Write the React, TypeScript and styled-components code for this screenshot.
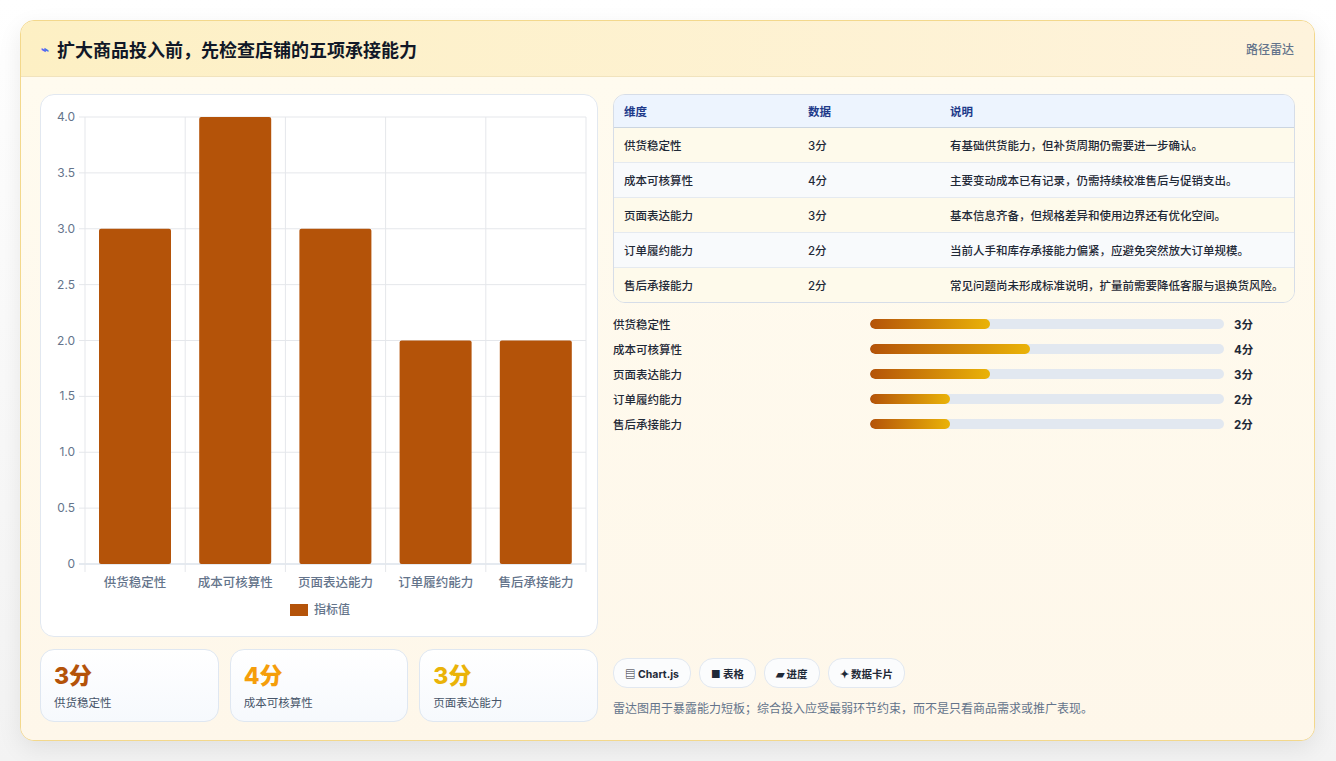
import styled, { createGlobalStyle } from 'styled-components'

const Global = createGlobalStyle`
  body {
    margin: 0;
    background: #f3f3f3;
    font-family: Inter, "Noto Sans CJK SC", sans-serif;
  }
`

const ROWS = [
  { name: '供货稳定性', v: 3, note: '有基础供货能力，但补货周期仍需要进一步确认。' },
  { name: '成本可核算性', v: 4, note: '主要变动成本已有记录，仍需持续校准售后与促销支出。' },
  { name: '页面表达能力', v: 3, note: '基本信息齐备，但规格差异和使用边界还有优化空间。' },
  { name: '订单履约能力', v: 2, note: '当前人手和库存承接能力偏紧，应避免突然放大订单规模。' },
  { name: '售后承接能力', v: 2, note: '常见问题尚未形成标准说明，扩量前需要降低客服与退换货风险。' },
]

const STAT_COLORS = ['#b45309', '#f59e0b', '#eab308']

function BarChart() {
  const W = 556
  const left = 44
  const right = 545
  const top = 22
  const bottom = 469
  const ticks = [0, 0.5, 1, 1.5, 2, 2.5, 3, 3.5, 4]
  const y = (v: number) => bottom - (v / 4) * (bottom - top)
  const cw = (right - left) / 5
  return (
    <svg width={W} height={541} viewBox={`0 0 ${W} 541`}>
      {ticks.map((t) => (
        <g key={t}>
          <line x1={left - 6} x2={right} y1={y(t)} y2={y(t)} stroke={t === 0 ? '#cbd5e1' : '#e5e7eb'} />
          <text x={left - 10} y={y(t) + 4} fontSize="12" fill="#64748b" textAnchor="end">
            {t === 0 ? '0' : t.toFixed(1)}
          </text>
        </g>
      ))}
      {[0, 1, 2, 3, 4, 5].map((i) => (
        <line key={i} x1={left + i * cw} x2={left + i * cw} y1={top} y2={bottom + 8} stroke="#e5e7eb" />
      ))}
      {ROWS.map((r, i) => (
        <g key={r.name}>
          <rect x={left + i * cw + 14} y={y(r.v)} width={72} height={bottom - y(r.v)} fill="#b45309" rx="2" />
          <text x={left + i * cw + cw / 2} y={bottom + 23} fontSize="12.5" fill="#64748b" textAnchor="middle" fontWeight="500">
            {r.name}
          </text>
        </g>
      ))}
      <rect x={249} y={509} width={18} height={12} fill="#b45309" />
      <text x={273} y={519} fontSize="12" fill="#64748b" fontWeight="500">指标值</text>
    </svg>
  )
}

export default function App() {
  return (
    <>
      <Global />
      <Page>
        <Card>
          <Header>
            <Title>
              <Spark>⌁</Spark>扩大商品投入前，先检查店铺的五项承接能力
            </Title>
            <Tag>路径雷达</Tag>
          </Header>
          <Body>
            <LeftCol>
              <ChartCard>
                <BarChart />
              </ChartCard>
              <Stats>
                {ROWS.slice(0, 3).map((r, i) => (
                  <Stat key={r.name}>
                    <StatNum $color={STAT_COLORS[i]}>{r.v}分</StatNum>
                    <StatLabel>{r.name}</StatLabel>
                  </Stat>
                ))}
              </Stats>
            </LeftCol>
            <RightCol>
              <Table>
                <thead>
                  <tr>
                    <Th style={{ width: 164 }}>维度</Th>
                    <Th style={{ width: 122 }}>数据</Th>
                    <Th>说明</Th>
                  </tr>
                </thead>
                <tbody>
                  {ROWS.map((r, i) => (
                    <Tr key={r.name} $odd={i % 2 === 1}>
                      <Td>{r.name}</Td>
                      <Td>{r.v}分</Td>
                      <Td>{r.note}</Td>
                    </Tr>
                  ))}
                </tbody>
              </Table>
              <Progress>
                {ROWS.map((r) => (
                  <PRow key={r.name}>
                    <PLabel>{r.name}</PLabel>
                    <Track>
                      <Fill style={{ width: `${(r.v / 8.85) * 100}%` }} />
                    </Track>
                    <PVal>{r.v}分</PVal>
                  </PRow>
                ))}
              </Progress>
              <Spacer />
              <Chips>
                <Chip>▤ Chart.js</Chip>
                <Chip>■ 表格</Chip>
                <Chip>▰ 进度</Chip>
                <Chip>✦ 数据卡片</Chip>
              </Chips>
              <Note>雷达图用于暴露能力短板；综合投入应受最弱环节约束，而不是只看商品需求或推广表现。</Note>
            </RightCol>
          </Body>
        </Card>
      </Page>
    </>
  )
}

const Page = styled.div`
  padding: 20px 20px 20px 20px;
  background: linear-gradient(#ffffff, #f3f3f3);
  height: 761px;
  box-sizing: border-box;
`

const Card = styled.div`
  width: 1295px;
  height: 721px;
  box-sizing: border-box;
  border: 1px solid #f3d88c;
  border-radius: 14px;
  background: #fff8ec;
  box-shadow: 0 8px 24px rgba(0, 0, 0, 0.08);
  overflow: hidden;
  display: flex;
  flex-direction: column;
`

const Header = styled.div`
  height: 55px;
  flex-shrink: 0;
  display: flex;
  align-items: center;
  justify-content: space-between;
  padding: 0 20px 0 20px;
  background: linear-gradient(90deg, #fdf0c4, #fef3dc);
  border-bottom: 1px solid #f1e3bd;
`

const Title = styled.h1`
  margin: 0;
  font-size: 18px;
  font-weight: 700;
  color: #111827;
  display: flex;
  align-items: center;
  gap: 8px;
`

const Spark = styled.span`
  color: #4f6cf0;
  font-size: 13px;
`

const Tag = styled.span`
  font-size: 12px;
  color: #64748b;
  font-weight: 500;
`

const Body = styled.div`
  flex: 1;
  display: flex;
  gap: 15px;
  padding: 17px 19px 18px 19px;
  background: linear-gradient(#fffbef, #fef7ea);
`

const LeftCol = styled.div`
  width: 558px;
  display: flex;
  flex-direction: column;
  gap: 12px;
`

const ChartCard = styled.div`
  height: 543px;
  box-sizing: border-box;
  background: #fff;
  border: 1px solid #e2e8f0;
  border-radius: 14px;
  overflow: hidden;
`

const Stats = styled.div`
  display: grid;
  grid-template-columns: repeat(3, 1fr);
  gap: 11px;
`

const Stat = styled.div`
  height: 73px;
  box-sizing: border-box;
  padding: 12px 13px;
  border: 1px solid #dfe7f1;
  border-radius: 14px;
  background: linear-gradient(#ffffff, #f6f9fd);
`

const StatNum = styled.div<{ $color: string }>`
  font-size: 23px;
  font-weight: 800;
  line-height: 28px;
  color: ${({ $color }) => $color};
`

const StatLabel = styled.div`
  font-size: 11.5px;
  color: #475569;
  margin-top: 4px;
`

const RightCol = styled.div`
  flex: 1;
  display: flex;
  flex-direction: column;
`

const Table = styled.table`
  width: 100%;
  border-collapse: separate;
  border-spacing: 0;
  border: 1px solid #d6dde8;
  border-radius: 12px;
  overflow: hidden;
  font-size: 11.5px;
`

const Th = styled.th`
  text-align: left;
  height: 32px;
  padding: 0 10px;
  background: #edf4fe;
  color: #1e3a8a;
  font-weight: 700;
  border-bottom: 1px solid #cbd5e1;
`

const Tr = styled.tr<{ $odd: boolean }>`
  background: ${({ $odd }) => ($odd ? '#f8fafc' : '#fefaeb')};
`

const Td = styled.td`
  height: 34px;
  padding: 0 10px;
  color: #1f2937;
  font-weight: 500;
  border-top: 1px solid #e5eaf0;
  tr:first-child > & {
    border-top: none;
  }
`

const Progress = styled.div`
  margin-top: 13px;
  display: flex;
  flex-direction: column;
  gap: 11px;
`

const PRow = styled.div`
  display: grid;
  grid-template-columns: 257px 354px 40px;
  align-items: center;
  height: 14px;
  font-size: 11.5px;
  color: #1f2937;
`

const PLabel = styled.span`
  font-weight: 500;
`

const Track = styled.div`
  height: 10px;
  border-radius: 5px;
  background: #e2e8f0;
  overflow: hidden;
`

const Fill = styled.div`
  height: 100%;
  border-radius: 5px;
  background: linear-gradient(90deg, #b45309, #eab308);
`

const PVal = styled.span`
  padding-left: 10px;
  font-weight: 700;
`

const Spacer = styled.div`
  flex: 1;
`

const Chips = styled.div`
  display: flex;
  gap: 8px;
`

const Chip = styled.span`
  height: 28px;
  padding: 0 11px;
  display: flex;
  align-items: center;
  border: 1px solid #e2e8f0;
  border-radius: 14px;
  background: #fbfcfd;
  font-size: 10.5px;
  font-weight: 700;
  color: #1f2937;
`

const Note = styled.p`
  margin: 11px 0 6px;
  font-size: 12px;
  color: #64748b;
`
